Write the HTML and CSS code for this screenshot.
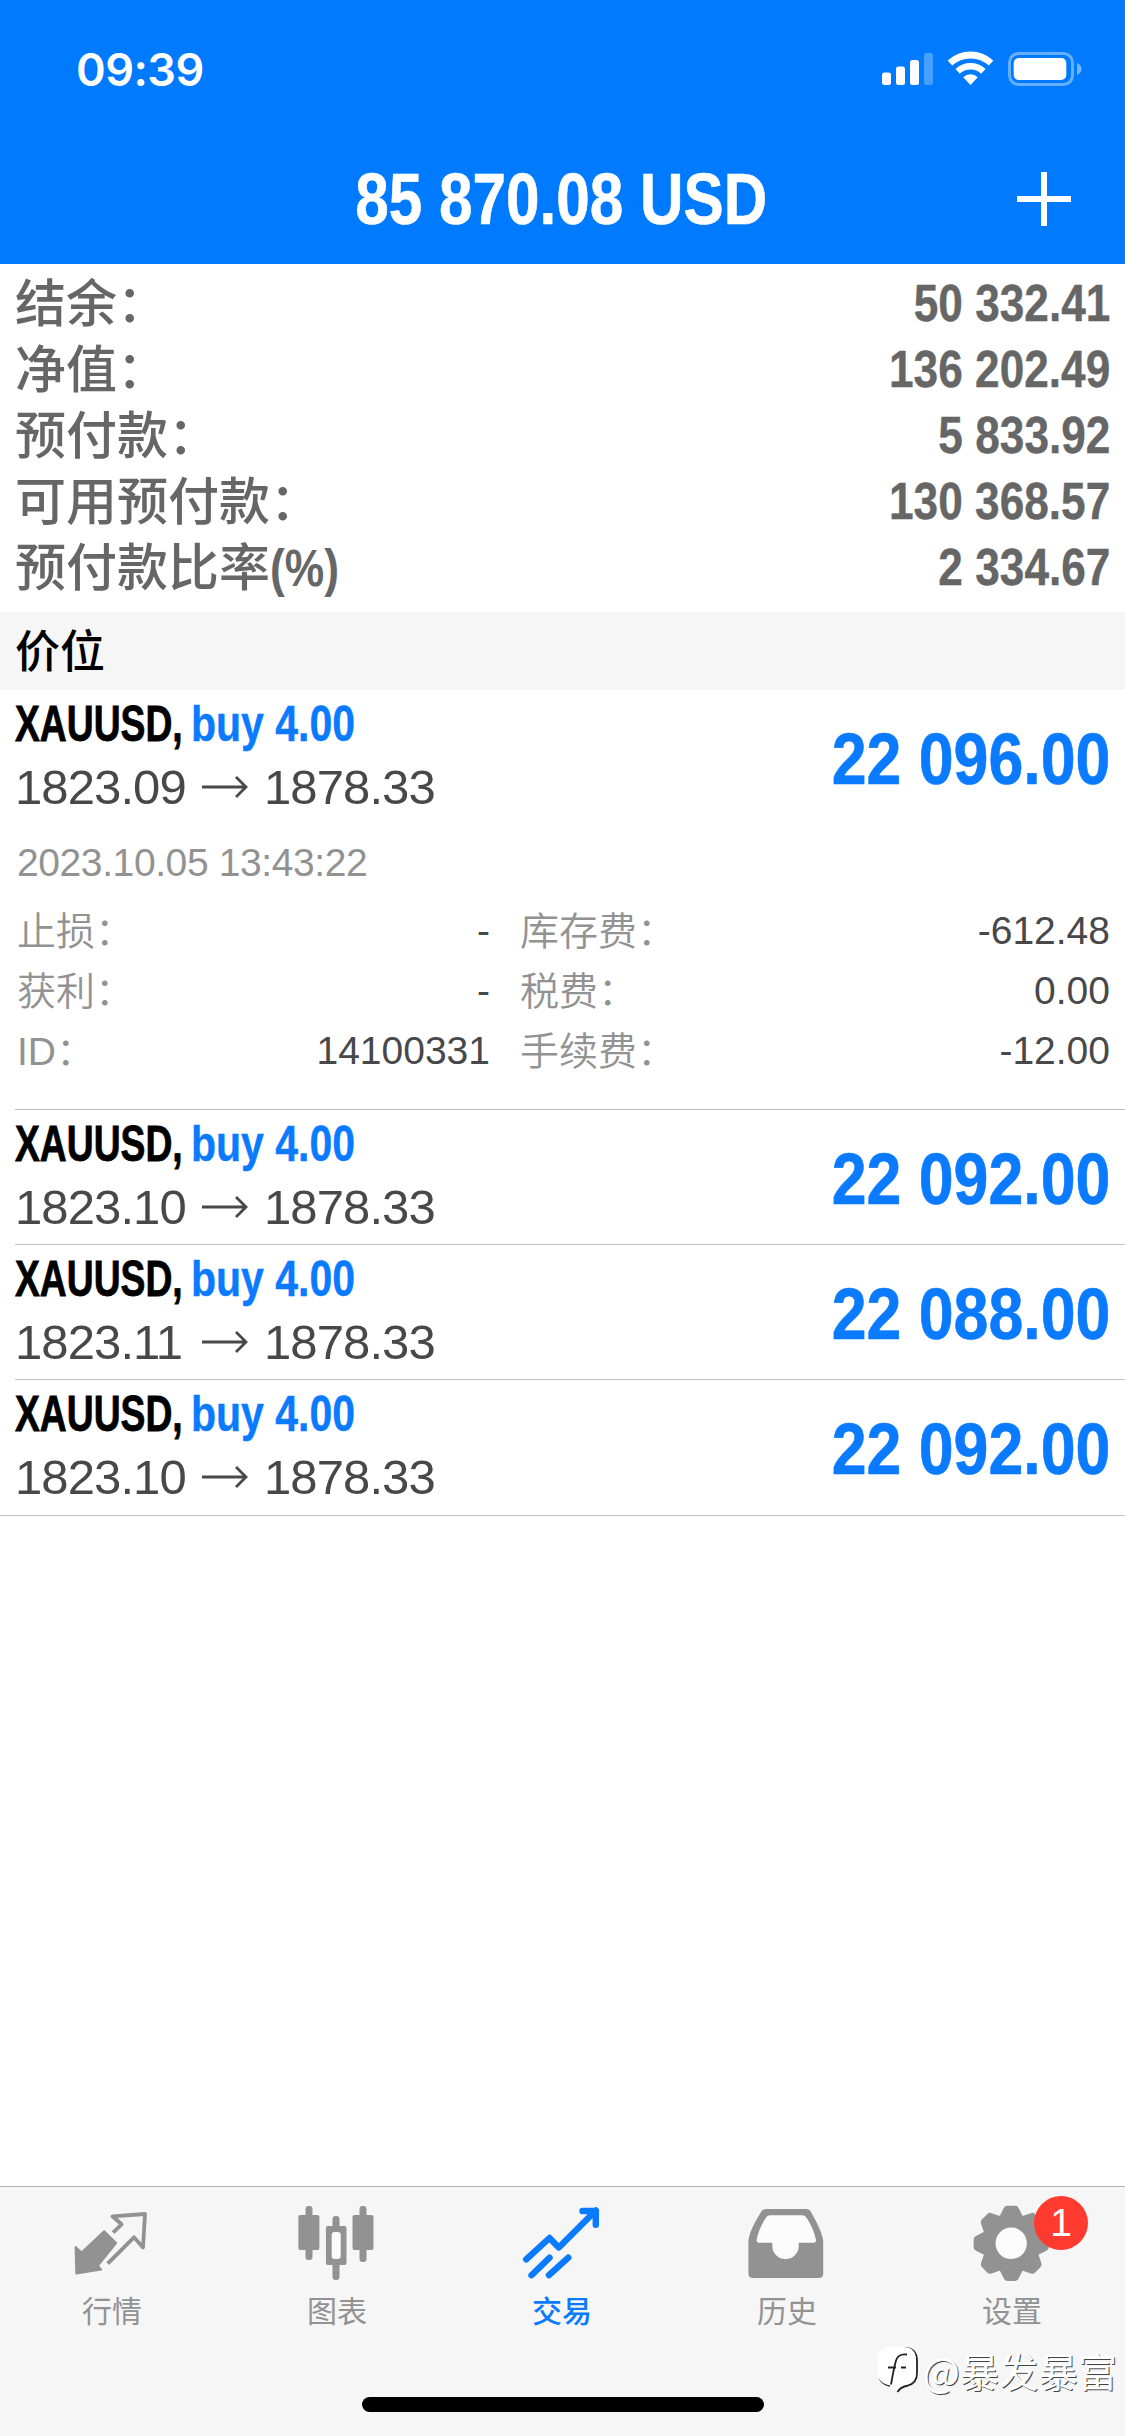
FILE: index.html
```html
<!DOCTYPE html>
<html lang="zh-CN">
<head>
<meta charset="utf-8">
<title>交易</title>
<link rel="stylesheet" href="styles.css">
</head>
<body>
<div class="app">
  <header class="header">
    <div class="status">
      <span class="clock">09:39</span>
      <div class="indicators">
        <svg width="51" height="36" viewBox="0 0 51 36" fill="#fff"><rect y="21.5" width="9" height="12.5" rx="2.5"/><rect x="14" y="15.5" width="9" height="18.5" rx="2.5"/><rect x="28" y="9" width="9" height="25" rx="2.5"/><rect x="42" y="2" width="9" height="32" rx="2.5" opacity=".28"/></svg>
        <svg width="45" height="36" viewBox="0 0 45 36" fill="none" stroke="#fff"><path d="M2 12.1a30 30 0 0 1 41 0" stroke-width="6.8"/><path d="M9.7 20.3a18.8 18.8 0 0 1 25.6 0" stroke-width="6.4"/><path d="M22.5 34l-7.3-7.8a10.7 10.7 0 0 1 14.6 0z" fill="#fff" stroke="none"/></svg>
        <svg width="74" height="36" viewBox="0 0 74 36"><rect x="1.5" y="2.5" width="63" height="31" rx="9" fill="none" stroke="#fff" stroke-width="3" opacity=".4"/><rect x="5.7" y="7" width="52.6" height="22" rx="5" fill="#fff"/><path d="M69 12q4.5 2 4.5 6t-4.5 6z" fill="#fff" opacity=".45"/></svg>
      </div>
    </div>
    <div class="nav">
      <h1 class="title">85 870.08 USD</h1>
      <svg class="add" width="54" height="54" viewBox="0 0 54 54" stroke="#fff" stroke-width="6"><path d="M27 0v54M0 27h54"/></svg>
    </div>
  </header>

  <section class="summary">
    <div class="sum-row"><span>结余：</span><b>50 332.41</b></div>
    <div class="sum-row"><span>净值：</span><b>136 202.49</b></div>
    <div class="sum-row"><span>预付款：</span><b>5 833.92</b></div>
    <div class="sum-row"><span>可用预付款：</span><b>130 368.57</b></div>
    <div class="sum-row"><span>预付款比率<i class="unit">(%)</i></span><b>2 334.67</b></div>
  </section>

  <h2 class="section-title">价位</h2>

  <main class="positions">
    <article class="position">
      <div class="main-row">
        <div class="info">
          <div class="deal"><span class="symbol">XAUUSD,</span><span class="side">buy 4.00</span></div>
          <div class="prices"><span>1823.09</span><svg width="46" height="22" viewBox="0 0 46 22"><path d="M0 11h44M34 1l10 10-10 10"/></svg><span>1878.33</span></div>
        </div>
        <div class="profit">22 096.00</div>
      </div>
      <div class="date">2023.10.05 13:43:22</div>
      <div class="details">
        <span>止损：</span><b>-</b><span class="second">库存费：</span><b>-612.48</b>
        <span>获利：</span><b>-</b><span class="second">税费：</span><b>0.00</b>
        <span>ID：</span><b>14100331</b><span class="second">手续费：</span><b>-12.00</b>
      </div>
    </article>
    <article class="position">
      <div class="main-row">
        <div class="info">
          <div class="deal"><span class="symbol">XAUUSD,</span><span class="side">buy 4.00</span></div>
          <div class="prices"><span>1823.10</span><svg width="46" height="22" viewBox="0 0 46 22"><path d="M0 11h44M34 1l10 10-10 10"/></svg><span>1878.33</span></div>
        </div>
        <div class="profit">22 092.00</div>
      </div>
    </article>
    <article class="position">
      <div class="main-row">
        <div class="info">
          <div class="deal"><span class="symbol">XAUUSD,</span><span class="side">buy 4.00</span></div>
          <div class="prices"><span>1823.11</span><svg width="46" height="22" viewBox="0 0 46 22"><path d="M0 11h44M34 1l10 10-10 10"/></svg><span>1878.33</span></div>
        </div>
        <div class="profit">22 088.00</div>
      </div>
    </article>
    <article class="position last">
      <div class="main-row">
        <div class="info">
          <div class="deal"><span class="symbol">XAUUSD,</span><span class="side">buy 4.00</span></div>
          <div class="prices"><span>1823.10</span><svg width="46" height="22" viewBox="0 0 46 22"><path d="M0 11h44M34 1l10 10-10 10"/></svg><span>1878.33</span></div>
        </div>
        <div class="profit">22 092.00</div>
      </div>
    </article>
  </main>

  <footer class="footer">
    <nav class="tabs">
      <a class="tab">
        <svg width="90" height="84" viewBox="0 0 90 84" stroke-linejoin="round"><path d="M46.1 32.7l8.5-8.4-9.1-8L78 14l-2 33.500-9-10.200-26.300 26.400" fill="none" stroke="#929292" stroke-width="3.800"/><path d="M37.100 31.200l12 11.800-18.200 22.600 3.300 4L9.300 73.600 8.600 47l6 5.500z" fill="#929292" stroke="#929292" stroke-width="2"/></svg>
        <span>行情</span>
      </a>
      <a class="tab">
        <svg width="90" height="84" viewBox="0 0 90 84" fill="#929292"><rect x="6.4" y="15" width="21" height="35" rx="2"/><rect x="13.5" y="6" width="7" height="54" rx="3"/><rect x="40.5" y="16" width="7" height="64" rx="3"/><rect x="33.9" y="26" width="20.6" height="39" rx="2"/><rect x="39.7" y="32" width="9" height="27" rx="3" fill="#fcfcfc"/><rect x="60.5" y="15" width="21" height="35" rx="2"/><rect x="67.5" y="6" width="7" height="56" rx="3"/></svg>
        <span>图表</span>
      </a>
      <a class="tab active">
        <svg width="90" height="84" viewBox="0 0 90 84" fill="none" stroke="#0a7aff" stroke-width="6.4" stroke-linecap="round" stroke-linejoin="round"><path d="M9.2 59.3L32.5 38l9.3 9.500 37-37M65.500 11h13.300v13.700M14.500 75.200l18-17.500M32 75.200l19.300-17.500"/></svg>
        <span>交易</span>
      </a>
      <a class="tab">
        <svg width="90" height="84" viewBox="0 0 90 84"><path d="M24 9h40q4 0 5.5 4Q81 33 81.2 42v31.500q0 4.500-4.500 4.500H11q-4.600 0-4.600-4.500V42Q6.500 32 18.500 13q1.500-4 5.500-4z" fill="#929292"/><path d="M28 15.300h32.500q3 0 4.200 2.700Q71.500 28 74 40q.3 2.700-2.200 2.700H56.700v3.300a13.200 13.200 0 0 1-26.400 0v-3.300H16.800q-2.500 0-2.200-2.700Q17 28 23.800 18q1.200-2.700 4.200-2.700z" fill="#fcfcfc"/></svg>
        <span>历史</span>
      </a>
      <a class="tab">
        <svg width="90" height="84" viewBox="0 0 90 84"><defs><path id="tooth" d="M-12.500-25L-7.400-35.200Q-6.300-37.600-4-37.600H4Q6.300-37.600 7.400-35.200L12.500-25z"/></defs><g transform="translate(44.200 43.300)" fill="#929292"><circle r="29"/><use href="#tooth"/><use href="#tooth" transform="rotate(45)"/><use href="#tooth" transform="rotate(90)"/><use href="#tooth" transform="rotate(135)"/><use href="#tooth" transform="rotate(180)"/><use href="#tooth" transform="rotate(225)"/><use href="#tooth" transform="rotate(270)"/><use href="#tooth" transform="rotate(315)"/><circle r="15.700" fill="#fcfcfc"/></g></svg>
        <span>设置</span>
        <em class="badge">1</em>
      </a>
    </nav>
    <div class="home-bar"></div>
    <div class="watermark">
      <svg width="42" height="48" viewBox="0 0 42 48"><path d="M14 2h12q13 0 13 13v12q0 10-9 12.500-8 1.500-10.500 6.500M2 33q2 5 10 7" fill="none" stroke="#222" stroke-width="1.800"/><path d="M13 1h12q13 0 13 13v12q0 10-9 12.500-8 1.500-10 6.500l-6-5.500Q0 38 0 26V14Q0 1 13 1z" fill="#fff"/><path d="M29 8.500q-9-1-11 6t-5 24M10 21.500h8M23 21.500h5" fill="none" stroke="#222" stroke-width="1.800"/></svg>
      <span>@暴发暴富</span>
    </div>
  </footer>
</div>
</body>
</html>
```
FILE: styles.css
```css
* { box-sizing: border-box; }

body {
  margin: 0;
  background: #fff;
  font-family: "Liberation Sans", "Noto Sans CJK SC", sans-serif;
}

h1, h2 { margin: 0; }
svg { display: block; flex: none; }
b, i, em { font-weight: inherit; font-style: normal; }

.app {
  width: 1125px;
  height: 2436px;
  display: flex;
  flex-direction: column;
  overflow: hidden;
}

/* Header */
.header {
  flex: none;
  height: 264px;
  background: #007aff;
  color: #fff;
}
.status {
  height: 132px;
  padding: 6px 43px 0 76px;
  display: flex;
  justify-content: space-between;
  align-items: center;
}
.clock {
  font: 600 45px/1 Inter, sans-serif;
  letter-spacing: -0.5px;
}
.indicators {
  display: flex;
  gap: 15px;
}
.nav {
  height: 132px;
  padding: 0 54px;
  display: grid;
  grid-template-columns: 54px 1fr 54px;
  align-items: center;
}
.title {
  grid-column: 2;
  padding-right: 3px;
  text-align: center;
  font-size: 73px;
  line-height: 134px;
  white-space: nowrap;
  -webkit-text-stroke: 0.6px #fff;
  transform: scaleX(0.825);
}

/* Account summary */
.summary {
  flex: none;
  height: 348px;
  padding: 6px 15px 12px 15px;
  color: #666;
}
.sum-row {
  height: 66px;
  display: flex;
  justify-content: space-between;
  font-size: 51px;
  font-weight: 500;
  line-height: 69px;
}
.sum-row b {
  font-size: 52px;
  font-weight: 700;
  line-height: 67px;
  -webkit-text-stroke: 0.4px #666;
  transform: scaleX(0.85);
  transform-origin: right;
}
.unit {
  display: inline-block;
  font-weight: 700;
  transform: scaleX(0.87);
  transform-origin: left;
}

.section-title {
  flex: none;
  height: 78px;
  padding-left: 15px;
  background: #f6f6f6;
  color: #000;
  font-size: 45px;
  font-weight: 500;
  line-height: 81px;
}

/* Positions */
.positions { flex: 1; }
.position {
  margin-left: 15px;
  border-bottom: 1px solid #bebebe;
}
.position.last {
  margin-left: 0;
  padding: 0 0 1px 15px;
}
.main-row {
  height: 134px;
  padding: 4px 15px 0 0;
  display: flex;
  justify-content: space-between;
}
.deal {
  display: flex;
  height: 60px;
  font-size: 50px;
  font-weight: 700;
  line-height: 61px;
  white-space: nowrap;
}
.symbol {
  margin-right: -49px;
  color: #000;
  -webkit-text-stroke: 0.8px #000;
  transform: scaleX(0.745);
  transform-origin: left;
}
.side {
  color: #0a7aff;
  -webkit-text-stroke: 0.4px #0a7aff;
  transform: scaleX(0.82);
  transform-origin: left;
}
.prices {
  display: flex;
  align-items: center;
  height: 66px;
  color: #48484a;
  font-size: 49px;
  letter-spacing: -0.9px;
  line-height: 66px;
}
.prices span { width: 174px; }
.prices svg {
  margin: 0 16px 0 13px;
  fill: none;
  stroke: #48484a;
  stroke-width: 2.8;
}
.profit {
  color: #0a7aff;
  font-size: 72px;
  font-weight: 700;
  line-height: 131px;
  white-space: nowrap;
  -webkit-text-stroke: 0.6px #0a7aff;
  transform: scaleX(0.87);
  transform-origin: right;
}
.date {
  height: 76px;
  padding-left: 2px;
  color: #929292;
  font-size: 39px;
  letter-spacing: -0.4px;
  line-height: 77px;
}
.details {
  height: 209px;
  padding: 0 15px 29px 2px;
  display: grid;
  grid-template-columns: 150px 323px 210px 1fr;
  grid-auto-rows: 60px;
  color: #929292;
  font-size: 39px;
  font-weight: 350;
  line-height: 63px;
  white-space: nowrap;
}
.details b {
  color: #48484a;
  font-weight: 400;
  line-height: 62px;
  text-align: right;
}
.details .second { padding-left: 30px; }

/* Tab bar */
.footer {
  position: relative;
  flex: none;
  height: 250px;
  border-top: 1px solid #b0b0b0;
  background: #f6f6f6;
}
.tabs {
  display: grid;
  grid-template-columns: repeat(5, 225px);
  height: 210px;
}
.tab {
  position: relative;
  display: flex;
  flex-direction: column;
  align-items: center;
  padding: 13px 1px 0 0;
  color: #929292;
  font-size: 30px;
  line-height: 56px;
}
.tab.active { color: #0a7aff; font-weight: 500; }
.badge {
  position: absolute;
  left: 134px;
  top: 9px;
  width: 54px;
  height: 54px;
  border-radius: 50%;
  background: #ff3b30;
  color: #fff;
  font-size: 39px;
  line-height: 54px;
  text-align: center;
}
.home-bar {
  width: 402px;
  height: 15px;
  margin: 0 auto;
  border-radius: 8px;
  background: #000;
}
.watermark {
  position: absolute;
  right: 8px;
  top: 157px;
  display: flex;
  align-items: center;
  gap: 3px;
  color: #fff;
  font: 400 39.3px/52px "Noto Sans CJK SC", sans-serif;
  text-shadow: 1px 1px 0 #444;
}
```
